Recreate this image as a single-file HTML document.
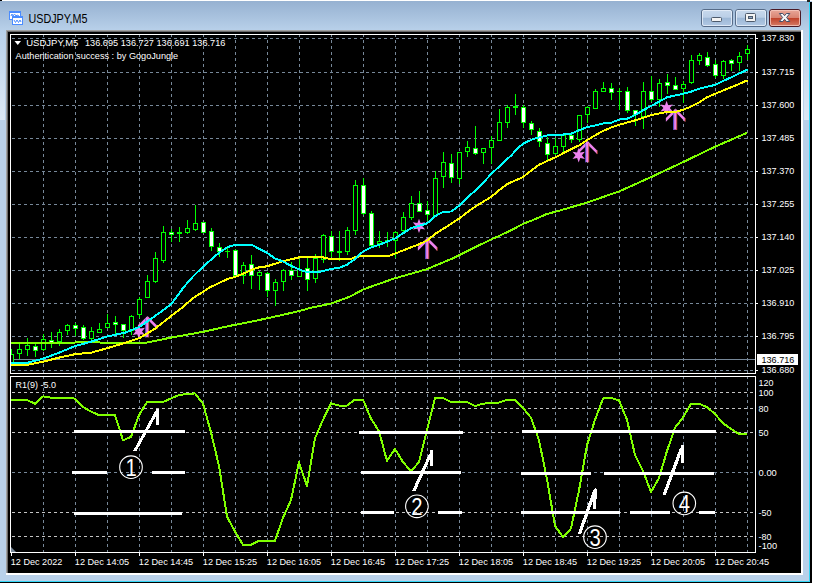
<!DOCTYPE html><html><head><meta charset="utf-8"><title>USDJPY,M5</title>
<style>html,body{margin:0;padding:0;background:#b9d1ea;overflow:hidden}svg{display:block}text{font-family:"Liberation Sans",sans-serif}</style></head><body>
<svg width="813" height="583" viewBox="0 0 813 583">
<defs>
<linearGradient id="tb" x1="0" y1="0" x2="0" y2="1"><stop offset="0" stop-color="#96b1d1"/><stop offset="1" stop-color="#b9d1ea"/></linearGradient>
<linearGradient id="bt" x1="0" y1="0" x2="0" y2="1"><stop offset="0" stop-color="#c8d9ed"/><stop offset="0.46" stop-color="#bbcfe7"/><stop offset="0.5" stop-color="#9cb7d6"/><stop offset="1" stop-color="#b3cae5"/></linearGradient>
<linearGradient id="cl" x1="0" y1="0" x2="0" y2="1"><stop offset="0" stop-color="#e9a99b"/><stop offset="0.48" stop-color="#d98472"/><stop offset="0.52" stop-color="#c0422a"/><stop offset="1" stop-color="#d6806a"/></linearGradient>
<clipPath id="cm"><rect x="11" y="35" width="744" height="338"/></clipPath><clipPath id="ci"><rect x="11" y="377" width="744" height="175"/></clipPath>
<linearGradient id="sd" x1="0" y1="0" x2="0" y2="1"><stop offset="0" stop-color="#b9d1ea"/><stop offset="1" stop-color="#dde8f4"/></linearGradient>
</defs>
<rect x="0" y="0" width="813" height="583" fill="#b9d1ea"/>
<rect x="0" y="1" width="810" height="30" fill="url(#tb)"/>
<rect x="0" y="0" width="813" height="1" fill="#ffffff"/>
<g shape-rendering="crispEdges">
<rect x="812" y="0" width="1" height="583" fill="#ffffff"/>
<rect x="810" y="2" width="2" height="581" fill="#000000"/>
<rect x="809" y="2" width="1" height="580" fill="#33d6f6"/>
<rect x="0" y="582" width="812" height="1" fill="#000000"/>
<rect x="0" y="581" width="810" height="1" fill="#33d6f6"/>
<rect x="0" y="0" width="2" height="1" fill="#000"/>
<rect x="807" y="0" width="3" height="2" fill="#222"/>
<rect x="0" y="31" width="5" height="89" fill="url(#sd)"/><rect x="804" y="31" width="5" height="89" fill="url(#sd)"/>
<rect x="6" y="30" width="797" height="545" fill="#ffffff"/>
<rect x="6" y="30" width="795" height="543" fill="#a0a0a0"/>
<rect x="7" y="31" width="794" height="542" fill="#696969"/>
<rect x="8" y="32" width="793" height="541" fill="#000000"/>
</g>
<g shape-rendering="crispEdges">
<rect x="9" y="11" width="12" height="9" fill="#4a8cff"/><rect x="10" y="13" width="10" height="6" fill="#ffffff"/>
<rect x="12" y="16" width="11" height="9" fill="#4a8cff"/><rect x="13" y="18" width="9" height="6" fill="#ffffff"/>
</g>
<polyline points="11,16 12,14 13,16 14.5,14 16,16 17,15 19,16" fill="none" stroke="#4a8cff" stroke-width="1"/>
<polyline points="14,20 15.5,22.5 17,20 18.5,22.5 20,20 21,22" fill="none" stroke="#4a8cff" stroke-width="1"/>
<text x="28.5" y="23" font-size="12" fill="#000" textLength="59" lengthAdjust="spacingAndGlyphs">USDJPY,M5</text>
<rect x="701.5" y="9.5" width="31" height="17" rx="2.5" fill="url(#bt)" stroke="#566b88"/>
<rect x="702.5" y="10.5" width="29" height="15" rx="1.5" fill="none" stroke="#e8f0fa" stroke-opacity="0.8"/>
<rect x="735.5" y="9.5" width="31" height="17" rx="2.5" fill="url(#bt)" stroke="#566b88"/>
<rect x="736.5" y="10.5" width="29" height="15" rx="1.5" fill="none" stroke="#e8f0fa" stroke-opacity="0.8"/>
<rect x="769.5" y="9.5" width="31" height="17" rx="2.5" fill="url(#cl)" stroke="#4a1a26"/>
<rect x="770.5" y="10.5" width="29" height="15" rx="1.5" fill="none" stroke="#f6c9bf" stroke-opacity="0.8"/>
<rect x="711.5" y="17.5" width="10" height="4" rx="1" fill="#f4f4f4" stroke="#4d5a6c"/>
<rect x="745.5" y="13.5" width="10" height="8" rx="1" fill="#f4f4f4" stroke="#4d5a6c"/><rect x="748.5" y="16.5" width="4" height="2" fill="#8ea7c6" stroke="#4d5a6c"/>
<polygon points="779.4,13.5 782.8,13.5 784.6,15.7 786.4,13.5 789.8,13.5 786.6,17.5 789.8,21.5 786.4,21.5 784.6,19.3 782.8,21.5 779.4,21.5 782.6,17.5" fill="#f6f6f6" stroke="#43506a" stroke-width="1" stroke-linejoin="round"/>
<g shape-rendering="crispEdges">
<line x1="43.5" y1="35" x2="43.5" y2="373" stroke="#778899" stroke-dasharray="3 3" stroke-dashoffset="1"/>
<line x1="43.5" y1="377" x2="43.5" y2="552" stroke="#778899" stroke-dasharray="3 3" stroke-dashoffset="1"/>
<line x1="75.5" y1="35" x2="75.5" y2="373" stroke="#778899" stroke-dasharray="3 3" stroke-dashoffset="1"/>
<line x1="75.5" y1="377" x2="75.5" y2="552" stroke="#778899" stroke-dasharray="3 3" stroke-dashoffset="1"/>
<line x1="107.5" y1="35" x2="107.5" y2="373" stroke="#778899" stroke-dasharray="3 3" stroke-dashoffset="1"/>
<line x1="107.5" y1="377" x2="107.5" y2="552" stroke="#778899" stroke-dasharray="3 3" stroke-dashoffset="1"/>
<line x1="139.5" y1="35" x2="139.5" y2="373" stroke="#778899" stroke-dasharray="3 3" stroke-dashoffset="1"/>
<line x1="139.5" y1="377" x2="139.5" y2="552" stroke="#778899" stroke-dasharray="3 3" stroke-dashoffset="1"/>
<line x1="171.5" y1="35" x2="171.5" y2="373" stroke="#778899" stroke-dasharray="3 3" stroke-dashoffset="1"/>
<line x1="171.5" y1="377" x2="171.5" y2="552" stroke="#778899" stroke-dasharray="3 3" stroke-dashoffset="1"/>
<line x1="203.5" y1="35" x2="203.5" y2="373" stroke="#778899" stroke-dasharray="3 3" stroke-dashoffset="1"/>
<line x1="203.5" y1="377" x2="203.5" y2="552" stroke="#778899" stroke-dasharray="3 3" stroke-dashoffset="1"/>
<line x1="235.5" y1="35" x2="235.5" y2="373" stroke="#778899" stroke-dasharray="3 3" stroke-dashoffset="1"/>
<line x1="235.5" y1="377" x2="235.5" y2="552" stroke="#778899" stroke-dasharray="3 3" stroke-dashoffset="1"/>
<line x1="267.5" y1="35" x2="267.5" y2="373" stroke="#778899" stroke-dasharray="3 3" stroke-dashoffset="1"/>
<line x1="267.5" y1="377" x2="267.5" y2="552" stroke="#778899" stroke-dasharray="3 3" stroke-dashoffset="1"/>
<line x1="299.5" y1="35" x2="299.5" y2="373" stroke="#778899" stroke-dasharray="3 3" stroke-dashoffset="1"/>
<line x1="299.5" y1="377" x2="299.5" y2="552" stroke="#778899" stroke-dasharray="3 3" stroke-dashoffset="1"/>
<line x1="331.5" y1="35" x2="331.5" y2="373" stroke="#778899" stroke-dasharray="3 3" stroke-dashoffset="1"/>
<line x1="331.5" y1="377" x2="331.5" y2="552" stroke="#778899" stroke-dasharray="3 3" stroke-dashoffset="1"/>
<line x1="363.5" y1="35" x2="363.5" y2="373" stroke="#778899" stroke-dasharray="3 3" stroke-dashoffset="1"/>
<line x1="363.5" y1="377" x2="363.5" y2="552" stroke="#778899" stroke-dasharray="3 3" stroke-dashoffset="1"/>
<line x1="395.5" y1="35" x2="395.5" y2="373" stroke="#778899" stroke-dasharray="3 3" stroke-dashoffset="1"/>
<line x1="395.5" y1="377" x2="395.5" y2="552" stroke="#778899" stroke-dasharray="3 3" stroke-dashoffset="1"/>
<line x1="427.5" y1="35" x2="427.5" y2="373" stroke="#778899" stroke-dasharray="3 3" stroke-dashoffset="1"/>
<line x1="427.5" y1="377" x2="427.5" y2="552" stroke="#778899" stroke-dasharray="3 3" stroke-dashoffset="1"/>
<line x1="459.5" y1="35" x2="459.5" y2="373" stroke="#778899" stroke-dasharray="3 3" stroke-dashoffset="1"/>
<line x1="459.5" y1="377" x2="459.5" y2="552" stroke="#778899" stroke-dasharray="3 3" stroke-dashoffset="1"/>
<line x1="491.5" y1="35" x2="491.5" y2="373" stroke="#778899" stroke-dasharray="3 3" stroke-dashoffset="1"/>
<line x1="491.5" y1="377" x2="491.5" y2="552" stroke="#778899" stroke-dasharray="3 3" stroke-dashoffset="1"/>
<line x1="523.5" y1="35" x2="523.5" y2="373" stroke="#778899" stroke-dasharray="3 3" stroke-dashoffset="1"/>
<line x1="523.5" y1="377" x2="523.5" y2="552" stroke="#778899" stroke-dasharray="3 3" stroke-dashoffset="1"/>
<line x1="555.5" y1="35" x2="555.5" y2="373" stroke="#778899" stroke-dasharray="3 3" stroke-dashoffset="1"/>
<line x1="555.5" y1="377" x2="555.5" y2="552" stroke="#778899" stroke-dasharray="3 3" stroke-dashoffset="1"/>
<line x1="587.5" y1="35" x2="587.5" y2="373" stroke="#778899" stroke-dasharray="3 3" stroke-dashoffset="1"/>
<line x1="587.5" y1="377" x2="587.5" y2="552" stroke="#778899" stroke-dasharray="3 3" stroke-dashoffset="1"/>
<line x1="619.5" y1="35" x2="619.5" y2="373" stroke="#778899" stroke-dasharray="3 3" stroke-dashoffset="1"/>
<line x1="619.5" y1="377" x2="619.5" y2="552" stroke="#778899" stroke-dasharray="3 3" stroke-dashoffset="1"/>
<line x1="651.5" y1="35" x2="651.5" y2="373" stroke="#778899" stroke-dasharray="3 3" stroke-dashoffset="1"/>
<line x1="651.5" y1="377" x2="651.5" y2="552" stroke="#778899" stroke-dasharray="3 3" stroke-dashoffset="1"/>
<line x1="683.5" y1="35" x2="683.5" y2="373" stroke="#778899" stroke-dasharray="3 3" stroke-dashoffset="1"/>
<line x1="683.5" y1="377" x2="683.5" y2="552" stroke="#778899" stroke-dasharray="3 3" stroke-dashoffset="1"/>
<line x1="715.5" y1="35" x2="715.5" y2="373" stroke="#778899" stroke-dasharray="3 3" stroke-dashoffset="1"/>
<line x1="715.5" y1="377" x2="715.5" y2="552" stroke="#778899" stroke-dasharray="3 3" stroke-dashoffset="1"/>
<line x1="747.5" y1="35" x2="747.5" y2="373" stroke="#778899" stroke-dasharray="3 3" stroke-dashoffset="1"/>
<line x1="747.5" y1="377" x2="747.5" y2="552" stroke="#778899" stroke-dasharray="3 3" stroke-dashoffset="1"/>
<line x1="11" y1="38.5" x2="755" y2="38.5" stroke="#778899" stroke-dasharray="3 3" stroke-dashoffset="5"/>
<line x1="11" y1="72.5" x2="755" y2="72.5" stroke="#778899" stroke-dasharray="3 3" stroke-dashoffset="5"/>
<line x1="11" y1="105.5" x2="755" y2="105.5" stroke="#778899" stroke-dasharray="3 3" stroke-dashoffset="5"/>
<line x1="11" y1="138.5" x2="755" y2="138.5" stroke="#778899" stroke-dasharray="3 3" stroke-dashoffset="5"/>
<line x1="11" y1="171.5" x2="755" y2="171.5" stroke="#778899" stroke-dasharray="3 3" stroke-dashoffset="5"/>
<line x1="11" y1="204.5" x2="755" y2="204.5" stroke="#778899" stroke-dasharray="3 3" stroke-dashoffset="5"/>
<line x1="11" y1="237.5" x2="755" y2="237.5" stroke="#778899" stroke-dasharray="3 3" stroke-dashoffset="5"/>
<line x1="11" y1="270.5" x2="755" y2="270.5" stroke="#778899" stroke-dasharray="3 3" stroke-dashoffset="5"/>
<line x1="11" y1="303.5" x2="755" y2="303.5" stroke="#778899" stroke-dasharray="3 3" stroke-dashoffset="5"/>
<line x1="11" y1="336.5" x2="755" y2="336.5" stroke="#778899" stroke-dasharray="3 3" stroke-dashoffset="5"/>
<line x1="11" y1="370.5" x2="755" y2="370.5" stroke="#778899" stroke-dasharray="3 3" stroke-dashoffset="5"/>
<line x1="11" y1="392.5" x2="755" y2="392.5" stroke="#c4c4c4" stroke-dasharray="3 3" stroke-dashoffset="5"/>
<line x1="11" y1="408.5" x2="755" y2="408.5" stroke="#c4c4c4" stroke-dasharray="3 3" stroke-dashoffset="5"/>
<line x1="11" y1="432.5" x2="755" y2="432.5" stroke="#c4c4c4" stroke-dasharray="3 3" stroke-dashoffset="5"/>
<line x1="11" y1="472.5" x2="755" y2="472.5" stroke="#778899" stroke-dasharray="3 3" stroke-dashoffset="5"/>
<line x1="11" y1="512.5" x2="755" y2="512.5" stroke="#c4c4c4" stroke-dasharray="3 3" stroke-dashoffset="5"/>
<line x1="11" y1="536.5" x2="755" y2="536.5" stroke="#c4c4c4" stroke-dasharray="3 3" stroke-dashoffset="5"/>
<rect x="11" y="359" width="745" height="1" fill="#778899"/>
</g>
<g shape-rendering="crispEdges" clip-path="url(#cm)">
<rect x="11" y="349" width="1" height="15" fill="#00ff00"/>
<rect x="9" y="354" width="5" height="9" fill="#00ff00"/>
<rect x="10" y="355" width="3" height="7" fill="#000000"/>
<rect x="19" y="344" width="1" height="15" fill="#00ff00"/>
<rect x="17" y="349" width="5" height="5" fill="#00ff00"/>
<rect x="18" y="350" width="3" height="3" fill="#000000"/>
<rect x="27" y="338" width="1" height="18" fill="#00ff00"/>
<rect x="25" y="345" width="5" height="5" fill="#00ff00"/>
<rect x="26" y="346" width="3" height="3" fill="#000000"/>
<rect x="35" y="344" width="1" height="13" fill="#00ff00"/>
<rect x="33" y="346" width="5" height="5" fill="#00ff00"/>
<rect x="34" y="347" width="3" height="3" fill="#ffffff"/>
<rect x="43" y="334" width="1" height="17" fill="#00ff00"/>
<rect x="41" y="339" width="5" height="11" fill="#00ff00"/>
<rect x="42" y="340" width="3" height="9" fill="#000000"/>
<rect x="51" y="332" width="1" height="16" fill="#00ff00"/>
<rect x="49" y="340" width="5" height="3" fill="#00ff00"/>
<rect x="50" y="341" width="3" height="1" fill="#ffffff"/>
<rect x="59" y="329" width="1" height="17" fill="#00ff00"/>
<rect x="57" y="332" width="5" height="10" fill="#00ff00"/>
<rect x="58" y="333" width="3" height="8" fill="#000000"/>
<rect x="67" y="324" width="1" height="11" fill="#00ff00"/>
<rect x="65" y="325" width="5" height="6" fill="#00ff00"/>
<rect x="66" y="326" width="3" height="4" fill="#000000"/>
<rect x="75" y="323" width="1" height="13" fill="#00ff00"/>
<rect x="73" y="325" width="5" height="4" fill="#00ff00"/>
<rect x="74" y="326" width="3" height="2" fill="#ffffff"/>
<rect x="83" y="325" width="1" height="15" fill="#00ff00"/>
<rect x="81" y="327" width="5" height="12" fill="#00ff00"/>
<rect x="82" y="328" width="3" height="10" fill="#ffffff"/>
<rect x="91" y="327" width="1" height="13" fill="#00ff00"/>
<rect x="89" y="331" width="5" height="8" fill="#00ff00"/>
<rect x="90" y="332" width="3" height="6" fill="#000000"/>
<rect x="99" y="323" width="1" height="10" fill="#00ff00"/>
<rect x="97" y="329" width="5" height="4" fill="#00ff00"/>
<rect x="98" y="330" width="3" height="2" fill="#000000"/>
<rect x="107" y="314" width="1" height="14" fill="#00ff00"/>
<rect x="105" y="323" width="5" height="5" fill="#00ff00"/>
<rect x="106" y="324" width="3" height="3" fill="#000000"/>
<rect x="115" y="316" width="1" height="20" fill="#00ff00"/>
<rect x="113" y="322" width="5" height="3" fill="#00ff00"/>
<rect x="114" y="323" width="3" height="1" fill="#ffffff"/>
<rect x="123" y="324" width="1" height="14" fill="#00ff00"/>
<rect x="121" y="324" width="5" height="7" fill="#00ff00"/>
<rect x="122" y="325" width="3" height="5" fill="#ffffff"/>
<rect x="131" y="315" width="1" height="20" fill="#00ff00"/>
<rect x="129" y="316" width="5" height="15" fill="#00ff00"/>
<rect x="130" y="317" width="3" height="13" fill="#000000"/>
<rect x="139" y="297" width="1" height="21" fill="#00ff00"/>
<rect x="137" y="299" width="5" height="16" fill="#00ff00"/>
<rect x="138" y="300" width="3" height="14" fill="#000000"/>
<rect x="147" y="275" width="1" height="23" fill="#00ff00"/>
<rect x="145" y="281" width="5" height="17" fill="#00ff00"/>
<rect x="146" y="282" width="3" height="15" fill="#000000"/>
<rect x="155" y="252" width="1" height="31" fill="#00ff00"/>
<rect x="153" y="258" width="5" height="24" fill="#00ff00"/>
<rect x="154" y="259" width="3" height="22" fill="#000000"/>
<rect x="163" y="226" width="1" height="37" fill="#00ff00"/>
<rect x="161" y="232" width="5" height="29" fill="#00ff00"/>
<rect x="162" y="233" width="3" height="27" fill="#000000"/>
<rect x="171" y="229" width="1" height="13" fill="#00ff00"/>
<rect x="169" y="232" width="5" height="3" fill="#00ff00"/>
<rect x="170" y="233" width="3" height="1" fill="#ffffff"/>
<rect x="179" y="227" width="1" height="15" fill="#00ff00"/>
<rect x="177" y="232" width="5" height="2" fill="#00ff00"/>
<rect x="187" y="220" width="1" height="14" fill="#00ff00"/>
<rect x="185" y="228" width="5" height="5" fill="#00ff00"/>
<rect x="186" y="229" width="3" height="3" fill="#000000"/>
<rect x="195" y="205" width="1" height="26" fill="#00ff00"/>
<rect x="193" y="223" width="5" height="7" fill="#00ff00"/>
<rect x="194" y="224" width="3" height="5" fill="#000000"/>
<rect x="203" y="222" width="1" height="11" fill="#00ff00"/>
<rect x="201" y="222" width="5" height="11" fill="#00ff00"/>
<rect x="202" y="223" width="3" height="9" fill="#ffffff"/>
<rect x="211" y="228" width="1" height="23" fill="#00ff00"/>
<rect x="209" y="231" width="5" height="16" fill="#00ff00"/>
<rect x="210" y="232" width="3" height="14" fill="#ffffff"/>
<rect x="219" y="243" width="1" height="14" fill="#00ff00"/>
<rect x="217" y="247" width="5" height="5" fill="#00ff00"/>
<rect x="218" y="248" width="3" height="3" fill="#ffffff"/>
<rect x="227" y="248" width="1" height="10" fill="#00ff00"/>
<rect x="225" y="251" width="5" height="1" fill="#00ff00"/>
<rect x="235" y="249" width="1" height="27" fill="#00ff00"/>
<rect x="233" y="250" width="5" height="26" fill="#00ff00"/>
<rect x="234" y="251" width="3" height="24" fill="#ffffff"/>
<rect x="243" y="262" width="1" height="22" fill="#00ff00"/>
<rect x="241" y="265" width="5" height="11" fill="#00ff00"/>
<rect x="242" y="266" width="3" height="9" fill="#000000"/>
<rect x="251" y="255" width="1" height="34" fill="#00ff00"/>
<rect x="249" y="264" width="5" height="12" fill="#00ff00"/>
<rect x="250" y="265" width="3" height="10" fill="#ffffff"/>
<rect x="259" y="271" width="1" height="19" fill="#00ff00"/>
<rect x="257" y="272" width="5" height="4" fill="#00ff00"/>
<rect x="258" y="273" width="3" height="2" fill="#000000"/>
<rect x="267" y="272" width="1" height="25" fill="#00ff00"/>
<rect x="265" y="273" width="5" height="18" fill="#00ff00"/>
<rect x="266" y="274" width="3" height="16" fill="#ffffff"/>
<rect x="275" y="279" width="1" height="27" fill="#00ff00"/>
<rect x="273" y="282" width="5" height="9" fill="#00ff00"/>
<rect x="274" y="283" width="3" height="7" fill="#000000"/>
<rect x="283" y="269" width="1" height="22" fill="#00ff00"/>
<rect x="281" y="270" width="5" height="12" fill="#00ff00"/>
<rect x="282" y="271" width="3" height="10" fill="#000000"/>
<rect x="291" y="262" width="1" height="18" fill="#00ff00"/>
<rect x="289" y="270" width="5" height="6" fill="#00ff00"/>
<rect x="290" y="271" width="3" height="4" fill="#ffffff"/>
<rect x="299" y="259" width="1" height="18" fill="#00ff00"/>
<rect x="297" y="269" width="5" height="8" fill="#00ff00"/>
<rect x="298" y="270" width="3" height="6" fill="#000000"/>
<rect x="307" y="258" width="1" height="33" fill="#00ff00"/>
<rect x="305" y="268" width="5" height="12" fill="#00ff00"/>
<rect x="306" y="269" width="3" height="10" fill="#ffffff"/>
<rect x="315" y="254" width="1" height="29" fill="#00ff00"/>
<rect x="313" y="258" width="5" height="21" fill="#00ff00"/>
<rect x="314" y="259" width="3" height="19" fill="#000000"/>
<rect x="323" y="234" width="1" height="29" fill="#00ff00"/>
<rect x="321" y="235" width="5" height="25" fill="#00ff00"/>
<rect x="322" y="236" width="3" height="23" fill="#000000"/>
<rect x="331" y="231" width="1" height="26" fill="#00ff00"/>
<rect x="329" y="236" width="5" height="16" fill="#00ff00"/>
<rect x="330" y="237" width="3" height="14" fill="#ffffff"/>
<rect x="339" y="231" width="1" height="30" fill="#00ff00"/>
<rect x="337" y="251" width="5" height="2" fill="#00ff00"/>
<rect x="347" y="227" width="1" height="28" fill="#00ff00"/>
<rect x="345" y="230" width="5" height="22" fill="#00ff00"/>
<rect x="346" y="231" width="3" height="20" fill="#000000"/>
<rect x="355" y="180" width="1" height="55" fill="#00ff00"/>
<rect x="353" y="185" width="5" height="46" fill="#00ff00"/>
<rect x="354" y="186" width="3" height="44" fill="#000000"/>
<rect x="363" y="178" width="1" height="37" fill="#00ff00"/>
<rect x="361" y="185" width="5" height="29" fill="#00ff00"/>
<rect x="362" y="186" width="3" height="27" fill="#ffffff"/>
<rect x="371" y="211" width="1" height="35" fill="#00ff00"/>
<rect x="369" y="213" width="5" height="33" fill="#00ff00"/>
<rect x="370" y="214" width="3" height="31" fill="#ffffff"/>
<rect x="379" y="231" width="1" height="17" fill="#00ff00"/>
<rect x="377" y="241" width="5" height="3" fill="#00ff00"/>
<rect x="378" y="242" width="3" height="1" fill="#000000"/>
<rect x="387" y="232" width="1" height="15" fill="#00ff00"/>
<rect x="385" y="240" width="5" height="1" fill="#00ff00"/>
<rect x="395" y="231" width="1" height="27" fill="#00ff00"/>
<rect x="393" y="232" width="5" height="9" fill="#00ff00"/>
<rect x="394" y="233" width="3" height="7" fill="#000000"/>
<rect x="403" y="212" width="1" height="20" fill="#00ff00"/>
<rect x="401" y="217" width="5" height="14" fill="#00ff00"/>
<rect x="402" y="218" width="3" height="12" fill="#000000"/>
<rect x="411" y="196" width="1" height="24" fill="#00ff00"/>
<rect x="409" y="203" width="5" height="15" fill="#00ff00"/>
<rect x="410" y="204" width="3" height="13" fill="#000000"/>
<rect x="419" y="191" width="1" height="21" fill="#00ff00"/>
<rect x="417" y="203" width="5" height="9" fill="#00ff00"/>
<rect x="418" y="204" width="3" height="7" fill="#ffffff"/>
<rect x="427" y="201" width="1" height="20" fill="#00ff00"/>
<rect x="425" y="210" width="5" height="5" fill="#00ff00"/>
<rect x="426" y="211" width="3" height="3" fill="#ffffff"/>
<rect x="435" y="171" width="1" height="45" fill="#00ff00"/>
<rect x="433" y="178" width="5" height="38" fill="#00ff00"/>
<rect x="434" y="179" width="3" height="36" fill="#000000"/>
<rect x="443" y="152" width="1" height="36" fill="#00ff00"/>
<rect x="441" y="162" width="5" height="15" fill="#00ff00"/>
<rect x="442" y="163" width="3" height="13" fill="#000000"/>
<rect x="451" y="154" width="1" height="29" fill="#00ff00"/>
<rect x="449" y="163" width="5" height="15" fill="#00ff00"/>
<rect x="450" y="164" width="3" height="13" fill="#ffffff"/>
<rect x="459" y="152" width="1" height="32" fill="#00ff00"/>
<rect x="457" y="152" width="5" height="27" fill="#00ff00"/>
<rect x="458" y="153" width="3" height="25" fill="#000000"/>
<rect x="467" y="141" width="1" height="16" fill="#00ff00"/>
<rect x="465" y="147" width="5" height="5" fill="#00ff00"/>
<rect x="466" y="148" width="3" height="3" fill="#000000"/>
<rect x="475" y="126" width="1" height="29" fill="#00ff00"/>
<rect x="473" y="148" width="5" height="6" fill="#00ff00"/>
<rect x="474" y="149" width="3" height="4" fill="#ffffff"/>
<rect x="483" y="148" width="1" height="16" fill="#00ff00"/>
<rect x="481" y="148" width="5" height="5" fill="#00ff00"/>
<rect x="482" y="149" width="3" height="3" fill="#000000"/>
<rect x="491" y="136" width="1" height="28" fill="#00ff00"/>
<rect x="489" y="140" width="5" height="8" fill="#00ff00"/>
<rect x="490" y="141" width="3" height="6" fill="#000000"/>
<rect x="499" y="109" width="1" height="32" fill="#00ff00"/>
<rect x="497" y="122" width="5" height="19" fill="#00ff00"/>
<rect x="498" y="123" width="3" height="17" fill="#000000"/>
<rect x="507" y="105" width="1" height="23" fill="#00ff00"/>
<rect x="505" y="107" width="5" height="16" fill="#00ff00"/>
<rect x="506" y="108" width="3" height="14" fill="#000000"/>
<rect x="515" y="94" width="1" height="21" fill="#00ff00"/>
<rect x="513" y="106" width="5" height="2" fill="#00ff00"/>
<rect x="523" y="105" width="1" height="23" fill="#00ff00"/>
<rect x="521" y="107" width="5" height="16" fill="#00ff00"/>
<rect x="522" y="108" width="3" height="14" fill="#ffffff"/>
<rect x="531" y="121" width="1" height="14" fill="#00ff00"/>
<rect x="529" y="123" width="5" height="7" fill="#00ff00"/>
<rect x="530" y="124" width="3" height="5" fill="#ffffff"/>
<rect x="539" y="128" width="1" height="19" fill="#00ff00"/>
<rect x="537" y="131" width="5" height="11" fill="#00ff00"/>
<rect x="538" y="132" width="3" height="9" fill="#ffffff"/>
<rect x="547" y="137" width="1" height="23" fill="#00ff00"/>
<rect x="545" y="143" width="5" height="12" fill="#00ff00"/>
<rect x="546" y="144" width="3" height="10" fill="#ffffff"/>
<rect x="555" y="138" width="1" height="17" fill="#00ff00"/>
<rect x="553" y="146" width="5" height="8" fill="#00ff00"/>
<rect x="554" y="147" width="3" height="6" fill="#000000"/>
<rect x="563" y="135" width="1" height="17" fill="#00ff00"/>
<rect x="561" y="135" width="5" height="12" fill="#00ff00"/>
<rect x="562" y="136" width="3" height="10" fill="#000000"/>
<rect x="571" y="135" width="1" height="8" fill="#00ff00"/>
<rect x="569" y="135" width="5" height="5" fill="#00ff00"/>
<rect x="570" y="136" width="3" height="3" fill="#ffffff"/>
<rect x="579" y="115" width="1" height="27" fill="#00ff00"/>
<rect x="577" y="115" width="5" height="25" fill="#00ff00"/>
<rect x="578" y="116" width="3" height="23" fill="#000000"/>
<rect x="587" y="106" width="1" height="17" fill="#00ff00"/>
<rect x="585" y="107" width="5" height="8" fill="#00ff00"/>
<rect x="586" y="108" width="3" height="6" fill="#000000"/>
<rect x="595" y="89" width="1" height="20" fill="#00ff00"/>
<rect x="593" y="91" width="5" height="18" fill="#00ff00"/>
<rect x="594" y="92" width="3" height="16" fill="#000000"/>
<rect x="603" y="82" width="1" height="10" fill="#00ff00"/>
<rect x="601" y="88" width="5" height="4" fill="#00ff00"/>
<rect x="602" y="89" width="3" height="2" fill="#000000"/>
<rect x="611" y="83" width="1" height="17" fill="#00ff00"/>
<rect x="609" y="88" width="5" height="5" fill="#00ff00"/>
<rect x="610" y="89" width="3" height="3" fill="#ffffff"/>
<rect x="619" y="88" width="1" height="22" fill="#00ff00"/>
<rect x="617" y="91" width="5" height="1" fill="#00ff00"/>
<rect x="627" y="87" width="1" height="26" fill="#00ff00"/>
<rect x="625" y="91" width="5" height="20" fill="#00ff00"/>
<rect x="626" y="92" width="3" height="18" fill="#ffffff"/>
<rect x="635" y="110" width="1" height="16" fill="#00ff00"/>
<rect x="633" y="110" width="5" height="5" fill="#00ff00"/>
<rect x="634" y="111" width="3" height="3" fill="#ffffff"/>
<rect x="643" y="82" width="1" height="47" fill="#00ff00"/>
<rect x="641" y="91" width="5" height="26" fill="#00ff00"/>
<rect x="642" y="92" width="3" height="24" fill="#000000"/>
<rect x="651" y="76" width="1" height="26" fill="#00ff00"/>
<rect x="649" y="91" width="5" height="9" fill="#00ff00"/>
<rect x="650" y="92" width="3" height="7" fill="#ffffff"/>
<rect x="659" y="79" width="1" height="28" fill="#00ff00"/>
<rect x="657" y="83" width="5" height="17" fill="#00ff00"/>
<rect x="658" y="84" width="3" height="15" fill="#000000"/>
<rect x="667" y="74" width="1" height="20" fill="#00ff00"/>
<rect x="665" y="82" width="5" height="4" fill="#00ff00"/>
<rect x="666" y="83" width="3" height="2" fill="#ffffff"/>
<rect x="675" y="77" width="1" height="13" fill="#00ff00"/>
<rect x="673" y="85" width="5" height="5" fill="#00ff00"/>
<rect x="674" y="86" width="3" height="3" fill="#ffffff"/>
<rect x="683" y="81" width="1" height="22" fill="#00ff00"/>
<rect x="681" y="84" width="5" height="5" fill="#00ff00"/>
<rect x="682" y="85" width="3" height="3" fill="#000000"/>
<rect x="691" y="55" width="1" height="29" fill="#00ff00"/>
<rect x="689" y="60" width="5" height="23" fill="#00ff00"/>
<rect x="690" y="61" width="3" height="21" fill="#000000"/>
<rect x="699" y="53" width="1" height="12" fill="#00ff00"/>
<rect x="697" y="55" width="5" height="6" fill="#00ff00"/>
<rect x="698" y="56" width="3" height="4" fill="#000000"/>
<rect x="707" y="52" width="1" height="15" fill="#00ff00"/>
<rect x="705" y="57" width="5" height="9" fill="#00ff00"/>
<rect x="706" y="58" width="3" height="7" fill="#ffffff"/>
<rect x="715" y="60" width="1" height="18" fill="#00ff00"/>
<rect x="713" y="64" width="5" height="12" fill="#00ff00"/>
<rect x="714" y="65" width="3" height="10" fill="#ffffff"/>
<rect x="723" y="60" width="1" height="19" fill="#00ff00"/>
<rect x="721" y="61" width="5" height="15" fill="#00ff00"/>
<rect x="722" y="62" width="3" height="13" fill="#000000"/>
<rect x="731" y="59" width="1" height="12" fill="#00ff00"/>
<rect x="729" y="60" width="5" height="4" fill="#00ff00"/>
<rect x="730" y="61" width="3" height="2" fill="#ffffff"/>
<rect x="739" y="52" width="1" height="19" fill="#00ff00"/>
<rect x="737" y="56" width="5" height="7" fill="#00ff00"/>
<rect x="738" y="57" width="3" height="5" fill="#000000"/>
<rect x="747" y="45" width="1" height="15" fill="#00ff00"/>
<rect x="745" y="49" width="5" height="5" fill="#00ff00"/>
<rect x="746" y="50" width="3" height="3" fill="#000000"/>
</g>
<g fill="#ee82ee"><polygon points="147.5,315.9 137.9,325.5 137.9,329.2 147.5,319.6"/><polygon points="147.5,315.9 157.1,325.5 157.1,329.2 147.5,319.6"/><rect x="145.2" y="318.5" width="1" height="19" fill="#6a62f0"/><rect x="148.2" y="318.5" width="1" height="19" fill="#e2552e"/><rect x="146.1" y="317.4" width="2.2" height="19.8"/><rect x="156.7" y="325.5" width="0.8" height="3.7" fill="#e2552e"/></g>
<g fill="#ee82ee"><polygon points="427.5,237.5 417.9,247.1 417.9,250.8 427.5,241.2"/><polygon points="427.5,237.5 437.1,247.1 437.1,250.8 427.5,241.2"/><rect x="425.2" y="240.1" width="1" height="19" fill="#6a62f0"/><rect x="428.2" y="240.1" width="1" height="19" fill="#e2552e"/><rect x="426.1" y="239.0" width="2.2" height="19.8"/><rect x="436.7" y="247.1" width="0.8" height="3.7" fill="#e2552e"/></g>
<g fill="#ee82ee"><polygon points="587.5,140.8 577.9,150.4 577.9,154.1 587.5,144.5"/><polygon points="587.5,140.8 597.1,150.4 597.1,154.1 587.5,144.5"/><rect x="585.2" y="143.4" width="1" height="19" fill="#6a62f0"/><rect x="588.2" y="143.4" width="1" height="19" fill="#e2552e"/><rect x="586.1" y="142.3" width="2.2" height="19.8"/><rect x="596.7" y="150.4" width="0.8" height="3.7" fill="#e2552e"/></g>
<g fill="#ee82ee"><polygon points="675.5,108.4 665.9,118.0 665.9,121.7 675.5,112.1"/><polygon points="675.5,108.4 685.1,118.0 685.1,121.7 675.5,112.1"/><rect x="673.2" y="111.0" width="1" height="19" fill="#6a62f0"/><rect x="676.2" y="111.0" width="1" height="19" fill="#e2552e"/><rect x="674.1" y="109.9" width="2.2" height="19.8"/><rect x="684.7" y="118.0" width="0.8" height="3.7" fill="#e2552e"/></g>
<polygon points="138.8,324.2 140.4,328.6 145.0,327.8 142.0,331.4 145.0,335.0 140.4,334.2 138.8,338.6 137.2,334.2 132.6,335.0 135.6,331.4 132.6,327.8 137.2,328.6" fill="#ee82ee"/>
<polygon points="419.0,218.7 420.6,223.1 425.2,222.3 422.2,225.9 425.2,229.5 420.6,228.7 419.0,233.1 417.4,228.7 412.8,229.5 415.8,225.9 412.8,222.3 417.4,223.1" fill="#ee82ee"/>
<polygon points="578.7,148.1 580.3,152.5 584.9,151.7 581.9,155.3 584.9,158.9 580.3,158.1 578.7,162.5 577.1,158.1 572.5,158.9 575.5,155.3 572.5,151.7 577.1,152.5" fill="#ee82ee"/>
<polygon points="666.6,100.8 668.2,105.2 672.8,104.4 669.8,108.0 672.8,111.6 668.2,110.8 666.6,115.2 665.0,110.8 660.4,111.6 663.4,108.0 660.4,104.4 665.0,105.2" fill="#ee82ee"/>
<g shape-rendering="crispEdges">
<polyline points="10.0,343.0 74.0,343.0 76.0,341.8 98.0,341.8 100.0,342.6 146.5,342.6 171.0,337.6 203.3,331.8 230.0,325.8 250.0,322.0 280.8,315.3 299.4,311.0 311.5,307.6 331.0,303.6 350.0,296.6 363.8,289.2 394.5,278.4 426.8,269.2 453.7,258.0 460.0,254.7 489.9,240.0 499.0,236.0 510.8,230.4 523.4,223.8 534.5,219.4 546.3,214.2 560.0,210.5 587.9,202.3 619.9,191.1 651.9,176.7 683.9,161.7 715.9,146.3 747.0,132.9" fill="none" stroke="#7fff00" stroke-width="2" stroke-linejoin="round"/>
<polyline points="10.0,365.0 27.0,365.0 43.4,361.6 59.0,357.6 75.0,354.2 91.0,352.7 107.0,348.3 124.8,342.9 139.5,338.0 154.3,329.2 171.3,315.9 183.8,306.3 192.7,298.2 203.3,291.6 210.0,287.3 219.0,283.0 227.9,278.9 235.7,276.7 243.0,273.7 256.6,267.8 266.9,266.3 283.0,261.2 291.7,259.2 300.0,257.1 323.0,257.1 325.0,258.4 331.0,258.6 333.0,259.1 350.8,259.1 355.0,257.2 360.0,256.4 388.0,256.2 395.0,253.6 411.0,247.3 419.0,244.3 427.0,240.6 435.0,234.0 443.3,228.8 451.0,223.8 459.2,218.6 469.5,210.5 479.1,204.3 491.7,196.5 499.8,189.6 507.9,183.7 522.7,177.3 530.0,171.4 538.9,164.9 549.2,160.0 555.0,157.5 571.0,149.2 579.0,145.4 587.0,140.2 595.0,135.4 603.0,130.9 611.0,127.6 619.0,124.8 627.0,122.6 635.0,120.4 643.0,117.9 651.0,115.2 659.0,113.5 667.0,112.0 675.0,112.0 683.0,109.8 691.0,106.6 699.0,102.6 707.0,97.3 715.0,93.8 723.0,90.6 731.0,87.3 739.0,84.0 746.0,80.9 747.5,80.9" fill="none" stroke="#ffff00" stroke-width="2" stroke-linejoin="round"/>
<polyline points="10.0,363.4 25.0,363.4 43.4,358.6 59.0,352.7 75.0,346.1 91.0,341.7 107.0,336.5 124.8,332.8 139.5,326.9 154.3,316.6 171.3,304.1 183.8,287.1 192.7,276.8 202.9,266.8 211.2,259.5 219.0,252.8 227.5,247.2 232.5,245.6 238.0,244.8 251.3,244.7 266.9,252.8 275.0,258.4 283.0,261.5 291.0,265.8 299.0,269.3 307.0,272.2 318.6,272.2 331.0,269.0 339.0,267.8 347.0,264.8 355.0,259.0 363.0,251.5 371.0,247.6 379.0,244.9 395.0,238.4 403.0,233.3 411.0,228.1 419.0,225.9 427.0,223.4 435.0,216.3 443.3,211.7 451.0,211.5 459.2,205.8 469.5,195.8 479.1,186.9 491.7,173.6 503.5,162.5 511.4,155.3 518.6,147.4 524.5,142.9 533.3,138.9 542.2,136.6 547.4,135.5 562.5,135.4 564.5,133.8 571.5,133.6 579.0,130.2 587.0,127.2 595.0,125.5 603.0,123.5 611.0,122.8 619.0,119.6 627.0,118.7 635.0,115.2 643.0,110.3 651.0,106.0 659.0,101.7 667.0,97.3 675.0,95.5 683.0,93.8 691.0,91.7 699.0,88.8 707.0,86.8 715.0,84.9 723.0,81.1 731.0,77.4 739.0,73.6 746.0,70.3 747.5,70.3" fill="none" stroke="#00ffff" stroke-width="2" stroke-linejoin="round"/>
<polyline points="11.0,400.3 19.0,400.0 27.0,400.0 35.0,403.7 43.0,396.4 51.0,397.6 59.0,397.6 67.0,397.6 75.0,398.7 83.0,407.0 91.0,411.5 99.0,415.2 107.0,415.2 115.0,415.2 123.0,440.3 131.0,436.9 139.0,415.2 147.0,402.0 155.0,402.0 163.0,402.0 171.0,398.5 179.0,395.0 187.0,394.0 195.0,393.4 203.0,403.7 211.0,432.3 219.0,466.0 227.0,516.6 235.0,531.5 243.0,544.8 251.0,544.8 259.0,540.7 267.0,540.7 275.0,540.7 283.0,517.8 291.0,500.0 299.0,462.3 307.0,486.0 315.0,438.5 323.0,419.8 331.0,403.3 339.0,405.6 347.0,405.6 355.0,399.6 363.0,399.6 371.0,418.6 379.0,431.2 387.0,460.9 395.0,449.0 403.0,462.1 411.0,471.2 419.0,462.1 427.0,430.0 435.0,398.0 443.0,398.0 451.0,401.9 459.0,401.9 467.0,401.9 475.0,406.0 483.0,403.7 491.0,403.0 499.0,402.6 507.0,399.9 515.0,399.9 523.0,407.9 531.0,417.7 539.0,440.3 547.0,479.3 555.0,525.8 563.0,537.2 571.0,528.5 579.0,490.3 587.0,445.3 595.0,419.8 603.0,398.5 611.0,398.0 619.0,400.3 627.0,419.8 635.0,455.0 643.0,471.0 651.0,492.0 659.0,478.0 667.0,451.0 675.0,427.8 683.0,417.5 691.0,403.7 699.0,403.7 707.0,407.2 715.0,414.0 723.0,423.2 731.0,428.9 739.0,433.9 747.0,433.9" fill="none" stroke="#7fff00" stroke-width="2" stroke-linejoin="round"/>
</g>
<g shape-rendering="crispEdges" fill="#ffffff">
<rect x="74" y="430" width="111" height="3" />
<rect x="72" y="471" width="35" height="3" />
<rect x="152" y="471" width="33" height="3" />
<rect x="74" y="512" width="108" height="3" />
<rect x="359" y="431" width="104" height="3" />
<rect x="361" y="471" width="100" height="3" />
<rect x="361" y="511" width="33" height="3" />
<rect x="438" y="511" width="24" height="3" />
<rect x="522" y="430" width="194" height="3" />
<rect x="521" y="472" width="70" height="3" />
<rect x="604" y="472" width="110" height="3" />
<rect x="521" y="511" width="99" height="3" />
<rect x="630" y="511" width="40" height="3" />
<rect x="699" y="511" width="16" height="3" />
</g>
<g shape-rendering="crispEdges" fill="#fff"><polygon points="133.3,450.6 136.7,450.6 158.7,411.0 155.3,411.0"/>
<rect x="156.0" y="409.0" width="3.0" height="16.0"/></g>
<g shape-rendering="crispEdges" fill="#fff"><polygon points="412.2,490.7 415.6,490.7 432.4,454.0 429.0,454.0"/>
<rect x="430.0" y="450.0" width="3.0" height="16.0"/></g>
<g shape-rendering="crispEdges" fill="#fff"><polygon points="577.8,533.8 581.2,533.8 596.3,491.0 592.9,491.0"/>
<rect x="593.0" y="490.0" width="3.0" height="19.0"/></g>
<polygon points="595.5,487.8 597,489.5 597,498.6 593,498.6 593,491" fill="#fff" shape-rendering="crispEdges"/>
<g shape-rendering="crispEdges" fill="#fff"><polygon points="662.4,494.9 665.8,494.9 683.3,448.0 679.9,448.0"/>
<rect x="681.0" y="445.0" width="3.0" height="18.0"/></g>
<circle cx="131.0" cy="467.2" r="11.3" fill="none" stroke="#fff" stroke-width="1.1"/>
<text transform="translate(131.0,475.5) scale(0.88,1)" x="0" y="0" font-size="23" fill="#fff" text-anchor="middle">1</text>
<circle cx="416.9" cy="506.3" r="11.3" fill="none" stroke="#fff" stroke-width="1.1"/>
<text transform="translate(416.9,514.6) scale(0.88,1)" x="0" y="0" font-size="23" fill="#fff" text-anchor="middle">2</text>
<circle cx="595.0" cy="537.2" r="11.3" fill="none" stroke="#fff" stroke-width="1.1"/>
<text transform="translate(595.0,545.5) scale(0.88,1)" x="0" y="0" font-size="23" fill="#fff" text-anchor="middle">3</text>
<circle cx="684.3" cy="503.4" r="11.3" fill="none" stroke="#fff" stroke-width="1.1"/>
<text transform="translate(684.3,511.7) scale(0.88,1)" x="0" y="0" font-size="23" fill="#fff" text-anchor="middle">4</text>
<g shape-rendering="crispEdges" fill="#ffffff">
<rect x="10" y="34" width="746" height="1"/><rect x="10" y="373" width="746" height="1"/><rect x="10" y="34" width="1" height="340"/><rect x="755" y="34" width="1" height="340"/>
<rect x="10" y="376" width="746" height="1"/><rect x="10" y="552" width="746" height="1"/><rect x="10" y="376" width="1" height="177"/><rect x="755" y="376" width="1" height="177"/>
<rect x="756" y="38" width="2" height="1"/>
<rect x="756" y="72" width="2" height="1"/>
<rect x="756" y="105" width="2" height="1"/>
<rect x="756" y="138" width="2" height="1"/>
<rect x="756" y="171" width="2" height="1"/>
<rect x="756" y="204" width="2" height="1"/>
<rect x="756" y="237" width="2" height="1"/>
<rect x="756" y="270" width="2" height="1"/>
<rect x="756" y="303" width="2" height="1"/>
<rect x="756" y="336" width="2" height="1"/>
<rect x="756" y="370" width="2" height="1"/>
<rect x="11" y="553" width="1" height="3"/>
<rect x="75" y="553" width="1" height="3"/>
<rect x="139" y="553" width="1" height="3"/>
<rect x="203" y="553" width="1" height="3"/>
<rect x="267" y="553" width="1" height="3"/>
<rect x="331" y="553" width="1" height="3"/>
<rect x="395" y="553" width="1" height="3"/>
<rect x="459" y="553" width="1" height="3"/>
<rect x="523" y="553" width="1" height="3"/>
<rect x="587" y="553" width="1" height="3"/>
<rect x="651" y="553" width="1" height="3"/>
<rect x="715" y="553" width="1" height="3"/>
</g>
<polygon points="11,547 11,552 16,552" fill="#778899"/>
<text x="761.5" y="41.4" font-size="9.8" fill="#fff" textLength="32.8" lengthAdjust="spacingAndGlyphs">137.830</text>
<text x="761.5" y="75.4" font-size="9.8" fill="#fff" textLength="32.8" lengthAdjust="spacingAndGlyphs">137.715</text>
<text x="761.5" y="108.4" font-size="9.8" fill="#fff" textLength="32.8" lengthAdjust="spacingAndGlyphs">137.600</text>
<text x="761.5" y="141.4" font-size="9.8" fill="#fff" textLength="32.8" lengthAdjust="spacingAndGlyphs">137.485</text>
<text x="761.5" y="174.4" font-size="9.8" fill="#fff" textLength="32.8" lengthAdjust="spacingAndGlyphs">137.370</text>
<text x="761.5" y="207.4" font-size="9.8" fill="#fff" textLength="32.8" lengthAdjust="spacingAndGlyphs">137.255</text>
<text x="761.5" y="240.4" font-size="9.8" fill="#fff" textLength="32.8" lengthAdjust="spacingAndGlyphs">137.140</text>
<text x="761.5" y="273.4" font-size="9.8" fill="#fff" textLength="32.8" lengthAdjust="spacingAndGlyphs">137.025</text>
<text x="761.5" y="306.4" font-size="9.8" fill="#fff" textLength="32.8" lengthAdjust="spacingAndGlyphs">136.910</text>
<text x="761.5" y="339.4" font-size="9.8" fill="#fff" textLength="32.8" lengthAdjust="spacingAndGlyphs">136.795</text>
<text x="761.5" y="373.4" font-size="9.8" fill="#fff" textLength="32.8" lengthAdjust="spacingAndGlyphs">136.680</text>
<rect x="757" y="354" width="41" height="11" fill="#ffffff" shape-rendering="crispEdges"/>
<text x="761.5" y="362.6" font-size="9.8" fill="#000" textLength="32.8" lengthAdjust="spacingAndGlyphs">136.716</text>
<text x="758.6" y="386.1" font-size="9.8" fill="#fff" textLength="15" lengthAdjust="spacingAndGlyphs">120</text>
<text x="758.6" y="396.2" font-size="9.8" fill="#fff" textLength="15" lengthAdjust="spacingAndGlyphs">100</text>
<text x="758.6" y="412.2" font-size="9.8" fill="#fff" textLength="10" lengthAdjust="spacingAndGlyphs">80</text>
<text x="758.6" y="436.2" font-size="9.8" fill="#fff" textLength="10" lengthAdjust="spacingAndGlyphs">50</text>
<text x="758.6" y="476.0" font-size="9.8" fill="#fff" textLength="18.2" lengthAdjust="spacingAndGlyphs">0.00</text>
<text x="758.6" y="516.2" font-size="9.8" fill="#fff" textLength="13" lengthAdjust="spacingAndGlyphs">-50</text>
<text x="758.6" y="539.9" font-size="9.8" fill="#fff" textLength="13" lengthAdjust="spacingAndGlyphs">-80</text>
<text x="758.6" y="549.3" font-size="9.8" fill="#fff" textLength="18.5" lengthAdjust="spacingAndGlyphs">-100</text>
<text x="10.8" y="564.8" font-size="9.8" fill="#fff" textLength="51.5" lengthAdjust="spacingAndGlyphs">12 Dec 2022</text>
<text x="74.8" y="564.8" font-size="9.8" fill="#fff" textLength="54.4" lengthAdjust="spacingAndGlyphs">12 Dec 14:05</text>
<text x="138.8" y="564.8" font-size="9.8" fill="#fff" textLength="54.4" lengthAdjust="spacingAndGlyphs">12 Dec 14:45</text>
<text x="202.8" y="564.8" font-size="9.8" fill="#fff" textLength="54.4" lengthAdjust="spacingAndGlyphs">12 Dec 15:25</text>
<text x="266.8" y="564.8" font-size="9.8" fill="#fff" textLength="54.4" lengthAdjust="spacingAndGlyphs">12 Dec 16:05</text>
<text x="330.8" y="564.8" font-size="9.8" fill="#fff" textLength="54.4" lengthAdjust="spacingAndGlyphs">12 Dec 16:45</text>
<text x="394.8" y="564.8" font-size="9.8" fill="#fff" textLength="54.4" lengthAdjust="spacingAndGlyphs">12 Dec 17:25</text>
<text x="458.8" y="564.8" font-size="9.8" fill="#fff" textLength="54.4" lengthAdjust="spacingAndGlyphs">12 Dec 18:05</text>
<text x="522.8" y="564.8" font-size="9.8" fill="#fff" textLength="54.4" lengthAdjust="spacingAndGlyphs">12 Dec 18:45</text>
<text x="586.8" y="564.8" font-size="9.8" fill="#fff" textLength="54.4" lengthAdjust="spacingAndGlyphs">12 Dec 19:25</text>
<text x="650.8" y="564.8" font-size="9.8" fill="#fff" textLength="54.4" lengthAdjust="spacingAndGlyphs">12 Dec 20:05</text>
<text x="714.8" y="564.8" font-size="9.8" fill="#fff" textLength="54.4" lengthAdjust="spacingAndGlyphs">12 Dec 20:45</text>
<polygon points="14.5,41 21,41 17.75,45" fill="#fff"/>
<text x="26.2" y="46.4" font-size="9.8" fill="#fff" textLength="52.2" lengthAdjust="spacingAndGlyphs">USDJPY,M5</text>
<text x="85" y="46.4" font-size="9.8" fill="#fff" textLength="140.4" lengthAdjust="spacingAndGlyphs">136.695 136.727 136.691 136.716</text>
<text x="15.6" y="59" font-size="9.8" fill="#fff" textLength="162.6" lengthAdjust="spacingAndGlyphs">Authentication success : by GogoJungle</text>
<text x="15.5" y="388.2" font-size="9.8" fill="#fff" textLength="40.5" lengthAdjust="spacingAndGlyphs">R1(9) -5.0</text>
</svg></body></html>
